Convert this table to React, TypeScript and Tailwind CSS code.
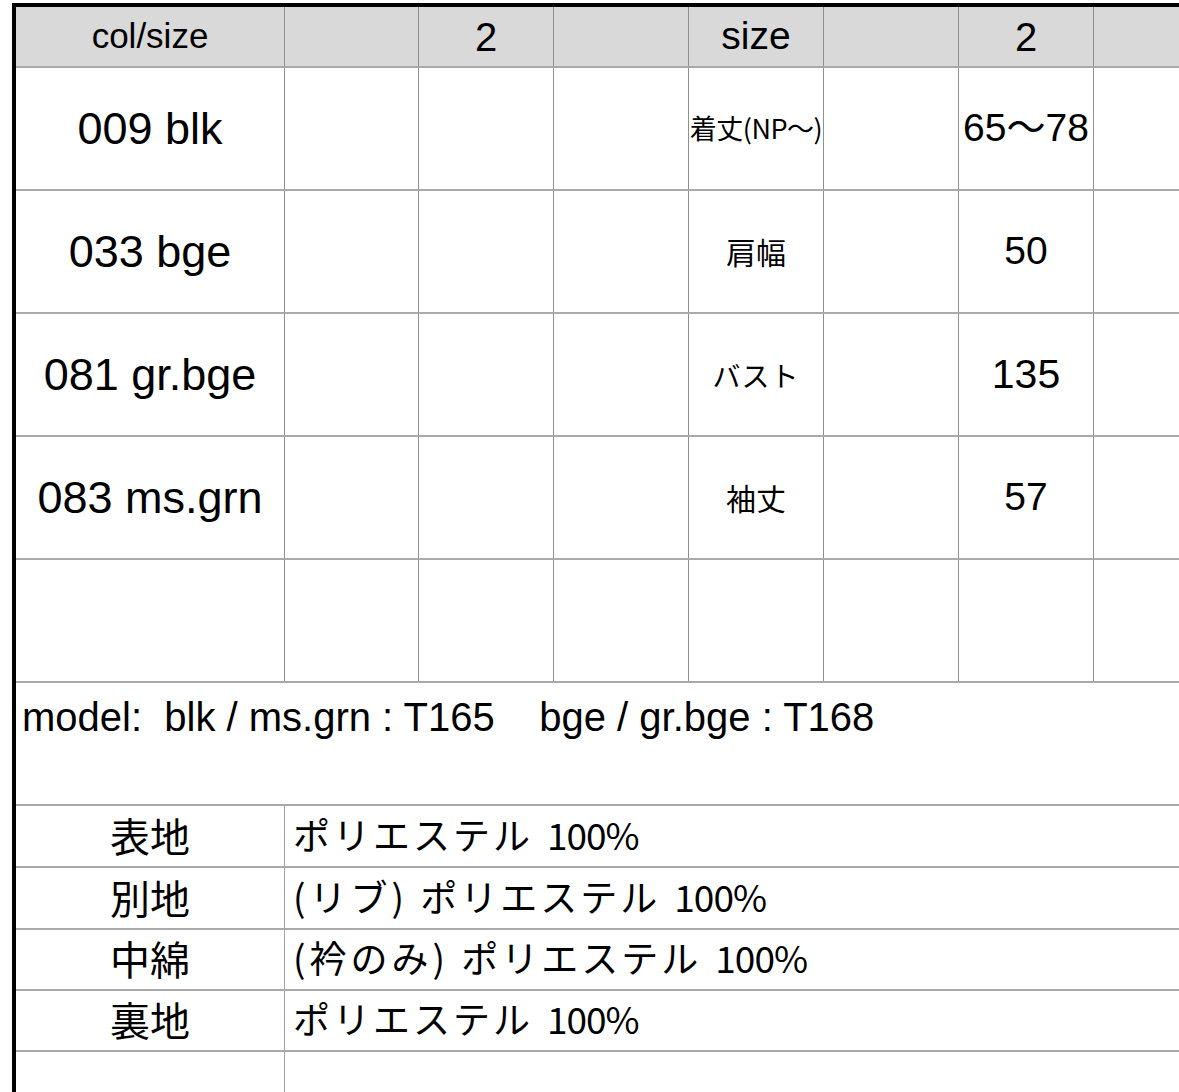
import React from "react";

const latin = { fontFamily: '"Liberation Sans", Arial, "Noto Sans CJK JP", sans-serif' };
const jp = { fontFamily: '"Noto Sans CJK JP", "Liberation Sans", sans-serif' };

const widths = ["w-[269px]", "w-[134px]", "w-[135px]", "w-[135px]", "w-[135px]", "w-[135px]", "w-[135px]"];

function Cell({ i, children, className = "" }: { i: number; children?: React.ReactNode; className?: string }) {
  const w = i < 7 ? widths[i] : "flex-1";
  const br = i < 7 ? "border-r border-[#8f8f8f]" : "";
  return (
    <div className={`${w} ${br} h-full shrink-0 flex items-center justify-center whitespace-nowrap text-black ${className}`}>
      {children}
    </div>
  );
}

const rows: { col: string; label: string; labelCls: string; val: string; valCls: string }[] = [
  { col: "009 blk", label: "着丈(NP〜)", labelCls: "text-[27px] tracking-[-0.5px]", val: "65〜78", valCls: "text-[39px]" },
  { col: "033 bge", label: "肩幅", labelCls: "text-[30px]", val: "50", valCls: "text-[39px]" },
  { col: "081 gr.bge", label: "バスト", labelCls: "text-[28px] tracking-[1px]", val: "135", valCls: "text-[41px]" },
  { col: "083 ms.grn", label: "袖丈", labelCls: "text-[30px]", val: "57", valCls: "text-[39px]" },
  { col: "", label: "", labelCls: "", val: "", valCls: "" },
];

const materials = [
  { k: "表地", pre: "", v: "ポリエステル", h: "h-[62px]" },
  { k: "別地", pre: "(リブ) ", v: "ポリエステル", h: "h-[62px]" },
  { k: "中綿", pre: "(衿のみ) ", v: "ポリエステル", h: "h-[61px]" },
  { k: "裏地", pre: "", v: "ポリエステル", h: "h-[61px]" },
];

export default function App() {
  return (
    <div className="w-[1179px] h-[1092px] overflow-hidden bg-white pt-[3px] pl-[12px]">
      <div className="h-[1200px] w-[1300px] border-l-4 border-t-4 border-black flex flex-col">
        {/* header */}
        <div className="flex h-[61px] bg-[#d9d9d9] border-b-2 border-[#a9a9a9] shrink-0" style={latin}>
          <Cell i={0} className="text-[35px]">col/size</Cell>
          <Cell i={1} />
          <Cell i={2} className="text-[40px]">2</Cell>
          <Cell i={3} />
          <Cell i={4} className="text-[39px]">size</Cell>
          <Cell i={5} />
          <Cell i={6} className="text-[40px]">2</Cell>
          <Cell i={7} />
        </div>
        {rows.map((r, idx) => (
          <div key={idx} className="flex h-[123px] border-b-2 border-[#a9a9a9] shrink-0" style={latin}>
            <Cell i={0} className="text-[45px]">{r.col}</Cell>
            <Cell i={1} />
            <Cell i={2} />
            <Cell i={3} />
            <Cell i={4} className={r.labelCls}>
              <span style={jp}>{r.label}</span>
            </Cell>
            <Cell i={5} />
            <Cell i={6} className={r.valCls}>{r.val}</Cell>
            <Cell i={7} />
          </div>
        ))}
        {/* model row */}
        <div className="h-[123px] border-b-2 border-[#a9a9a9] shrink-0 pl-[6px] pt-[10px]" style={latin}>
          <div className="text-[40px] leading-[48px] text-black whitespace-pre">
            {"model:  blk / ms.grn : T165    bge / gr.bge : T168"}
          </div>
        </div>
        {/* materials */}
        {materials.map((m) => (
          <div key={m.k} className={`flex ${m.h} border-b-2 border-[#a9a9a9] shrink-0`} style={jp}>
            <div className="w-[269px] border-r border-[#a0a0a0] h-full flex items-center justify-center text-[40px] text-black pb-[3px]">
              {m.k}
            </div>
            <div className="flex-1 h-full flex items-center pl-[8px] pb-[3px] text-[37px] text-black whitespace-pre">
              <span className="tracking-[4px]">{m.pre}</span>
              <span className="tracking-[3px]">{m.v}</span>
              <span className="ml-[14px] tracking-[-1px]">100%</span>
            </div>
          </div>
        ))}
        <div className="flex flex-1" style={jp}>
          <div className="w-[269px] border-r border-[#a0a0a0] h-full" />
          <div className="flex-1" />
        </div>
      </div>
    </div>
  );
}
